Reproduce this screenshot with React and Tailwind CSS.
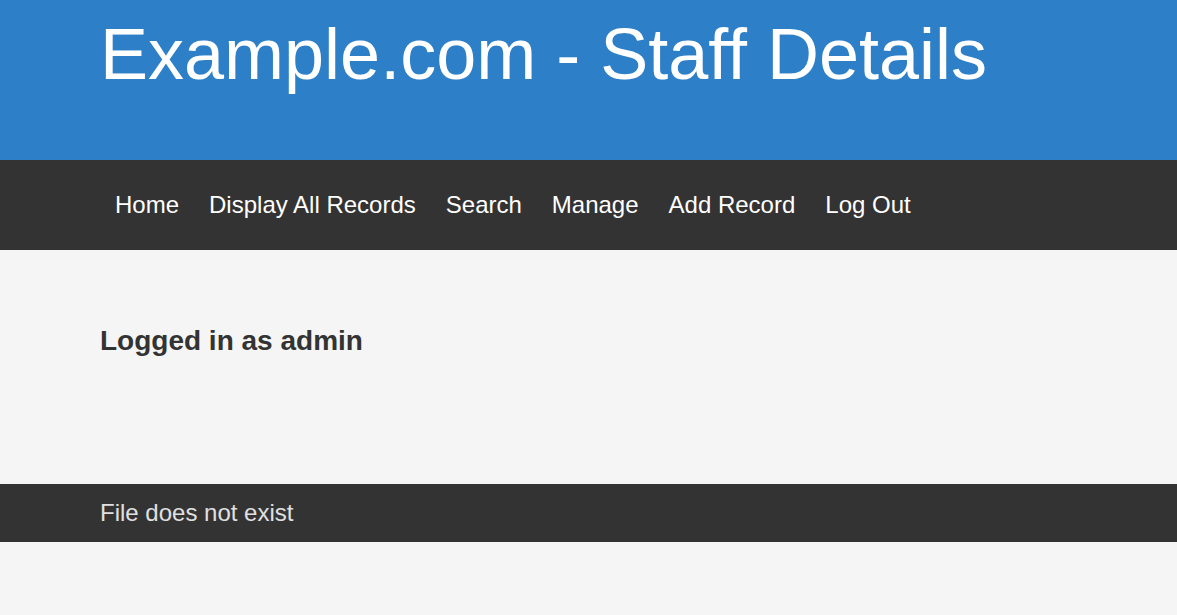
export default function App() {
  const links = ['Home', 'Display All Records', 'Search', 'Manage', 'Add Record', 'Log Out']

  return (
    <div className="min-h-[615px] bg-[#f5f5f5] font-['Liberation_Sans',Arial,sans-serif]">
      {/* Header */}
      <header className="h-[160px] bg-[#2d7fc8] px-[100px]">
        <h1 className="text-[72px] leading-[108px] text-white">Example.com - Staff Details</h1>
      </header>

      {/* Nav */}
      <nav className="h-[90px] bg-[#333333] px-[100px]">
        <ul className="flex h-full items-center">
          {links.map((l) => (
            <li key={l} className="px-[15px] text-[24px] text-white">
              {l}
            </li>
          ))}
        </ul>
      </nav>

      {/* Main */}
      <main className="h-[234px] px-[100px] pt-[70px]">
        <h2 className="text-[28px] font-bold text-[#333333]">Logged in as admin</h2>
      </main>

      {/* Footer */}
      <footer className="flex h-[58px] items-center bg-[#333333] px-[100px]">
        <p className="text-[24px] text-[#e0e0e0]">File does not exist</p>
      </footer>
    </div>
  )
}
